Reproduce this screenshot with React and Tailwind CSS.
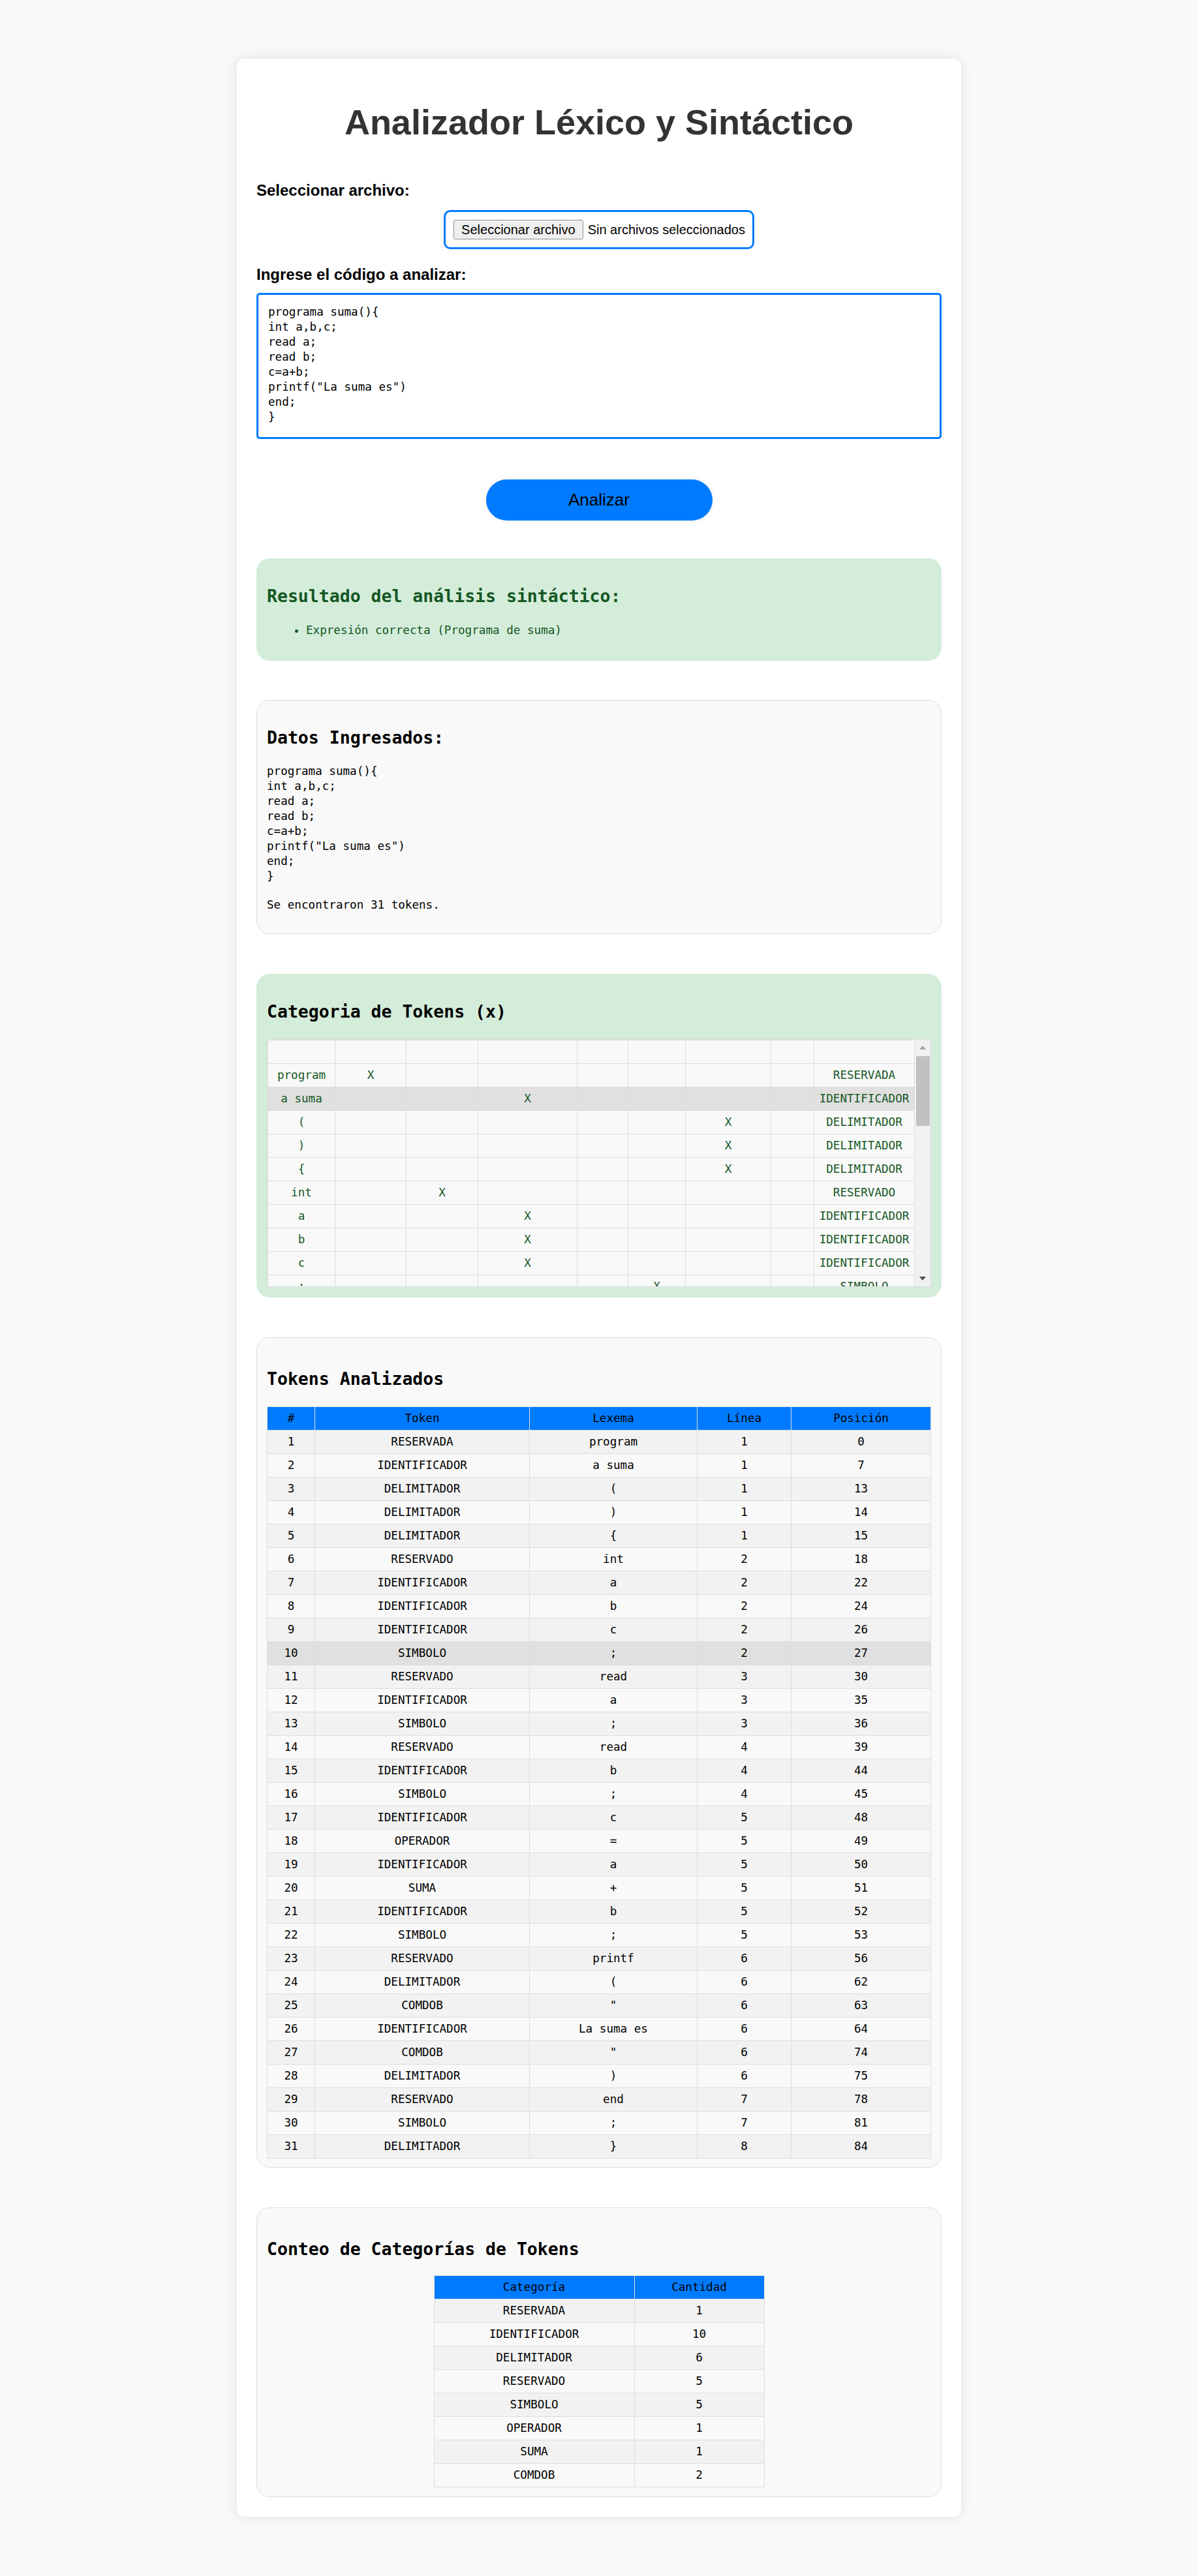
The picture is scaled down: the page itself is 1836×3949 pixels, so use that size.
import React from "react";

/* ---------------- DATA ---------------- */

const CODE = `programa suma(){
int a,b,c;
read a;
read b;
c=a+b;
printf("La suma es")
end;
}`;

const TOKENS = [
  ["RESERVADA", "program", 1, 0],
  ["IDENTIFICADOR", "a suma", 1, 7],
  ["DELIMITADOR", "(", 1, 13],
  ["DELIMITADOR", ")", 1, 14],
  ["DELIMITADOR", "{", 1, 15],
  ["RESERVADO", "int", 2, 18],
  ["IDENTIFICADOR", "a", 2, 22],
  ["IDENTIFICADOR", "b", 2, 24],
  ["IDENTIFICADOR", "c", 2, 26],
  ["SIMBOLO", ";", 2, 27],
  ["RESERVADO", "read", 3, 30],
  ["IDENTIFICADOR", "a", 3, 35],
  ["SIMBOLO", ";", 3, 36],
  ["RESERVADO", "read", 4, 39],
  ["IDENTIFICADOR", "b", 4, 44],
  ["SIMBOLO", ";", 4, 45],
  ["IDENTIFICADOR", "c", 5, 48],
  ["OPERADOR", "=", 5, 49],
  ["IDENTIFICADOR", "a", 5, 50],
  ["SUMA", "+", 5, 51],
  ["IDENTIFICADOR", "b", 5, 52],
  ["SIMBOLO", ";", 5, 53],
  ["RESERVADO", "printf", 6, 56],
  ["DELIMITADOR", "(", 6, 62],
  ["COMDOB", '"', 6, 63],
  ["IDENTIFICADOR", "La suma es", 6, 64],
  ["COMDOB", '"', 6, 74],
  ["DELIMITADOR", ")", 6, 75],
  ["RESERVADO", "end", 7, 78],
  ["SIMBOLO", ";", 7, 81],
  ["DELIMITADOR", "}", 8, 84],
];

const COUNTS = [
  ["RESERVADA", 1],
  ["IDENTIFICADOR", 10],
  ["DELIMITADOR", 6],
  ["RESERVADO", 5],
  ["SIMBOLO", 5],
  ["OPERADOR", 1],
  ["SUMA", 1],
  ["COMDOB", 2],
];

// column where the X goes in the category grid
const COL_OF = {
  RESERVADA: 1,
  RESERVADO: 2,
  IDENTIFICADOR: 3,
  OPERADOR: 4,
  SUMA: 4,
  SIMBOLO: 5,
  DELIMITADOR: 6,
  COMDOB: 7,
};

const CAT_WIDTHS = ["w-[103px]", "w-[109px]", "w-[110px]", "w-[152px]", "w-[78px]", "w-[88px]", "w-[131px]", "w-[66px]", ""];

const mono = "font-['DejaVu_Sans_Mono',monospace]";
const sans = "font-['Liberation_Sans',Arial,sans-serif]";

/* ---------------- PIECES ---------------- */

function SectionTitle({ children, className = "" }) {
  return (
    <h3 className={`${mono} text-[26.5px] leading-[34px] font-bold ${className}`}>
      {children}
    </h3>
  );
}

function FakeScrollbar() {
  return (
    <div className="w-[24px] bg-[#f1f1f1] flex flex-col items-center">
      <div className="h-[24px] w-full flex items-center justify-center">
        <svg width="10" height="6" viewBox="0 0 10 6">
          <path d="M0 6 L5 0 L10 6 Z" fill="#a3a3a3" />
        </svg>
      </div>
      <div className="w-[21px] h-[107px] bg-[#c1c1c1] mt-[1px]" />
      <div className="flex-1" />
      <div className="h-[24px] w-full flex items-center justify-center">
        <svg width="10" height="6" viewBox="0 0 10 6">
          <path d="M0 0 L5 6 L10 0 Z" fill="#505050" />
        </svg>
      </div>
    </div>
  );
}

function CategoryGrid() {
  return (
    <div className="mt-[25px] h-[380px] border border-[#ddd] flex">
      <div className="flex-1 overflow-hidden">
        <table className={`w-full table-fixed border-collapse ${mono} text-[17.6px] text-[#155724]`}>
          <colgroup>
            {CAT_WIDTHS.map((w, i) => (
              <col key={i} className={w} />
            ))}
          </colgroup>
          <tbody>
            <tr className="h-[36px] bg-[#f9f9f9]">
              {CAT_WIDTHS.map((_, i) => (
                <td key={i} className="border border-[#ddd] p-0" />
              ))}
            </tr>
            {TOKENS.map(([type, lex], r) => (
              <tr key={r} className={`h-[36px] ${r === 1 ? "bg-[#e0e0e0]" : "bg-[#f9f9f9]"}`}>
                {CAT_WIDTHS.map((_, c) => (
                  <td key={c} className="border border-[#ddd] p-0 text-center align-middle whitespace-nowrap">
                    {c === 0 ? lex : c === 8 ? type : COL_OF[type] === c ? "X" : ""}
                  </td>
                ))}
              </tr>
            ))}
          </tbody>
        </table>
      </div>
      <FakeScrollbar />
    </div>
  );
}

/* ---------------- MAIN ---------------- */

export default function App() {
  return (
    <div className="bg-[#f9f9f9] pt-[90px] pb-[90px] min-h-screen">
      <div className="w-[1110px] mx-auto bg-white rounded-[12px] p-[30px] shadow-[0_0_20px_rgba(0,0,0,0.1)]">
        {/* HEADER */}
        <h1 className={`${sans} mt-[36px] text-center text-[54px] leading-[62px] font-bold text-[#333]`}>
          Analizador Léxico y Sintáctico
        </h1>

        {/* FILE */}
        <div className={`${sans} mt-[60px] text-[24px] leading-[27px] font-bold text-black`}>
          Seleccionar archivo:
        </div>
        <div className="mt-[17px] flex justify-center">
          <div className={`${sans} h-[60px] flex items-center border-[3px] border-[#007bff] rounded-[10px] pl-[12px] pr-[11px] text-[20px] text-black`}>
            <span className="h-[30px] px-[11px] flex items-center bg-[#efefef] border border-[#8f8f8f] rounded-[3px]">
              Seleccionar archivo
            </span>
            <span className="ml-[7px]">Sin archivos seleccionados</span>
          </div>
        </div>

        {/* CODE INPUT */}
        <div className={`${sans} mt-[25px] text-[24px] leading-[27px] font-bold text-black`}>
          Ingrese el código a analizar:
        </div>
        <textarea
          defaultValue={CODE}
          spellCheck={false}
          className={`${mono} block mt-[15px] w-full h-[224px] border-[3px] border-[#007bff] rounded-[5px] px-[15px] pt-[15px] text-[17.6px] leading-[23px] text-black resize-none outline-none bg-white`}
        />

        <div className="mt-[62px] flex justify-center">
          <button className={`${sans} w-[347px] h-[63px] rounded-full bg-[#007bff] text-[26px] text-black shadow-[0_0_10px_rgba(0,0,0,0.08)]`}>
            Analizar
          </button>
        </div>

        {/* RESULT */}
        <div className="mt-[58px] h-[157px] bg-[#d4edda] border border-[#d4edda] rounded-[20px] px-[15px]">
          <SectionTitle className="mt-[40px] text-[#155724]">
            Resultado del análisis sintáctico:
          </SectionTitle>
          <ul className={`${mono} mt-[23.5px] list-disc pl-[60px] text-[17.6px] leading-[23px] text-[#155724]`}>
            <li>Expresión correcta (Programa de suma)</li>
          </ul>
        </div>

        {/* DATOS */}
        <div className="mt-[60px] h-[359px] bg-[#f9f9f9] border border-[#ddd] rounded-[20px] px-[15px]">
          <SectionTitle className="mt-[40px] text-black">Datos Ingresados:</SectionTitle>
          <pre className={`${mono} mt-[23px] text-[17.6px] leading-[23px] text-black`}>{CODE}</pre>
          <p className={`${mono} mt-[20.5px] text-[17.6px] leading-[23px] text-black`}>
            Se encontraron 31 tokens.
          </p>
        </div>

        {/* CATEGORIAS */}
        <div className="mt-[61px] h-[496px] bg-[#d4edda] border border-[#d4edda] rounded-[20px] px-[15px]">
          <SectionTitle className="mt-[40px] text-black">Categoria de Tokens (x)</SectionTitle>
          <CategoryGrid />
        </div>

        {/* TOKENS */}
        <div className="mt-[61px] h-[1273px] bg-[#f9f9f9] border border-[#ddd] rounded-[20px] px-[15px]">
          <SectionTitle className="mt-[46px] text-black">Tokens Analizados</SectionTitle>
          <table className={`mt-[25px] w-full table-fixed border-collapse ${mono} text-[17.6px] text-black`}>
            <colgroup>
              <col className="w-[73px]" />
              <col className="w-[329px]" />
              <col className="w-[257px]" />
              <col className="w-[144px]" />
              <col />
            </colgroup>
            <thead>
              <tr className="h-[36px] bg-[#007bff]">
                {["#", "Token", "Lexema", "Línea", "Posición"].map((h) => (
                  <th key={h} className="border border-[#ddd] p-0 font-normal text-center">
                    {h}
                  </th>
                ))}
              </tr>
            </thead>
            <tbody>
              {TOKENS.map(([type, lex, line, pos], i) => (
                <tr
                  key={i}
                  className={`h-[36px] ${
                    i === 9 ? "bg-[#e0e0e0]" : i % 2 === 0 ? "bg-[#f2f2f2]" : "bg-[#f9f9f9]"
                  }`}
                >
                  <td className="border border-[#ddd] p-0 text-center">{i + 1}</td>
                  <td className="border border-[#ddd] p-0 text-center">{type}</td>
                  <td className="border border-[#ddd] p-0 text-center whitespace-pre">{lex}</td>
                  <td className="border border-[#ddd] p-0 text-center">{line}</td>
                  <td className="border border-[#ddd] p-0 text-center">{pos}</td>
                </tr>
              ))}
            </tbody>
          </table>
        </div>

        {/* CONTEO */}
        <div className="mt-[61px] h-[444px] bg-[#f9f9f9] border border-[#ddd] rounded-[20px] px-[15px]">
          <SectionTitle className="mt-[46px] text-black">Conteo de Categorías de Tokens</SectionTitle>
          <table className={`mt-[23px] mx-auto w-[507px] table-fixed border-collapse ${mono} text-[17.6px] text-black`}>
            <colgroup>
              <col className="w-[307px]" />
              <col />
            </colgroup>
            <thead>
              <tr className="h-[36px] bg-[#007bff]">
                <th className="border border-[#ddd] p-0 font-normal text-center">Categoría</th>
                <th className="border border-[#ddd] p-0 font-normal text-center">Cantidad</th>
              </tr>
            </thead>
            <tbody>
              {COUNTS.map(([cat, n], i) => (
                <tr key={cat} className={`h-[36px] ${i % 2 === 0 ? "bg-[#f2f2f2]" : "bg-[#f9f9f9]"}`}>
                  <td className="border border-[#ddd] p-0 text-center">{cat}</td>
                  <td className="border border-[#ddd] p-0 text-center">{n}</td>
                </tr>
              ))}
            </tbody>
          </table>
        </div>
      </div>
    </div>
  );
}
